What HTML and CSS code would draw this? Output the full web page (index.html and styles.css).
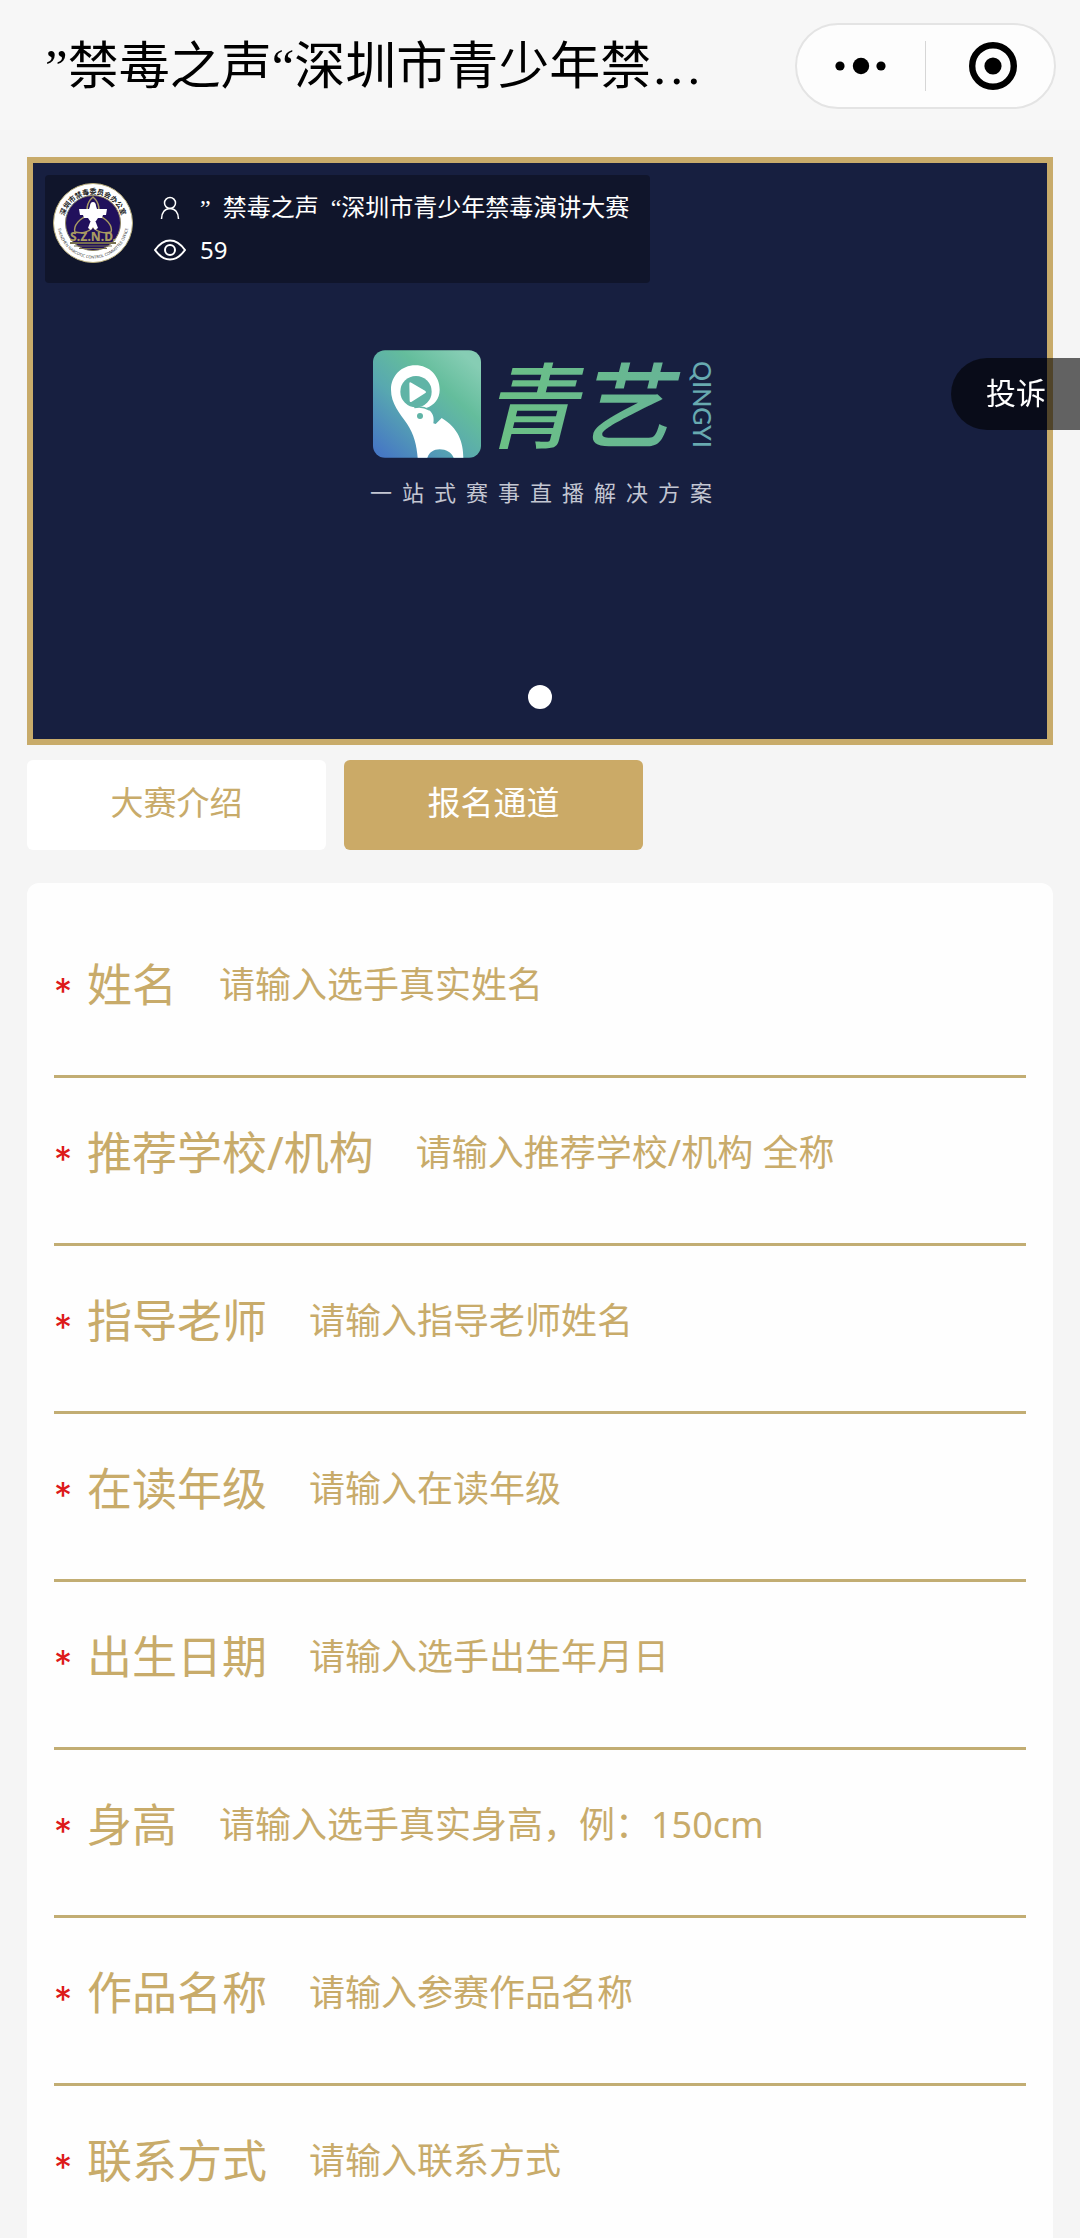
FILE: index.html
```html
<!DOCTYPE html>
<html lang="zh-CN">
<head>
<meta charset="utf-8">
<meta name="viewport" content="width=device-width, initial-scale=1">
<title>深圳市青少年禁毒演讲大赛</title>
<link rel="stylesheet" href="styles.css">
</head>
<body>
<header class="nav">
  <h1 class="nav-title">”禁毒之声“深圳市青少年禁…</h1>
  <div class="capsule">
    <button class="capsule-btn" type="button" aria-label="更多">
      <svg width="52" height="18" viewBox="0 0 52 18"><circle cx="5" cy="9" r="4.6"/><circle cx="26" cy="9" r="8.2"/><circle cx="46" cy="9" r="4.6"/></svg>
    </button>
    <span class="capsule-line"></span>
    <button class="capsule-btn capsule-close" type="button" aria-label="关闭">
      <svg width="48" height="48" viewBox="0 0 48 48"><circle cx="24" cy="24" r="20.8" fill="none" stroke="#000" stroke-width="6.4"/><circle cx="24" cy="24" r="8.6"/></svg>
    </button>
  </div>
</header>

<main class="content">
  <section class="banner">
    <div class="live-info">
      <svg class="emblem" viewBox="0 0 80 80" aria-hidden="true">
        <defs>
          <path id="arc-top" d="M11 46A29.500 29.500 0 1 1 69 46"/>
          <path id="arc-bottom" d="M4.500 40A35.500 35.500 0 0 0 75.500 40"/>
        </defs>
        <circle cx="40" cy="40" r="39.500" fill="#fff" stroke="#b9ad7c"/>
        <circle cx="40" cy="40" r="27.500" fill="#21105c" stroke="#8d8562"/>
        <text class="emblem-cn"><textPath href="#arc-top" startOffset="50%" text-anchor="middle">深圳市禁毒委员会办公室</textPath></text>
        <text class="emblem-en"><textPath href="#arc-bottom" startOffset="50%" text-anchor="middle">SHENZHEN NARCOTIC CONTROL COMMITTEE OFFICE</textPath></text>
        <path d="M40 14C33 20 33 28 36 33C27 34 20 43 22 49C29 51 36 49 40 44C44 49 51 51 58 49C60 43 53 34 44 33C47 28 47 20 40 14Z" fill="none" stroke="#a89b62" stroke-width="1.500"/>
        <path d="M40 19c-2 0-3 2-3 4l-1 3H26l1 6h3l1 3h4l2 3h6l2-3h4l1-3h3l1-6H44l-1-3c0-2-1-4-3-4z" fill="#fff"/>
        <path d="M38 37l-3 8 3 2 2-3 2 3 3-2-3-8z" fill="#fff"/>
        <path d="M17 59h46v2H17zM21 62.500h38v1H21zM26 65h28v1H26z" fill="#77704f"/>
        <text class="emblem-mark" x="40" y="57.500" text-anchor="middle">S.Z.N.D.</text>
      </svg>
      <div class="live-lines">
        <p class="live-line">
          <svg class="live-icon" width="32" height="24" viewBox="0 0 32 24"><circle cx="16" cy="7" r="5.500"/><path d="M7.500 23c0-6.500 3.500-10.500 8.500-10.500s8.500 4 8.500 10.500"/></svg>
          <span class="live-name">”&nbsp; 禁毒之声&nbsp; “深圳市青少年禁毒演讲大赛</span>
        </p>
        <p class="live-line">
          <svg class="live-icon live-eye" width="32" height="24" viewBox="0 0 32 24"><path d="M1 12C6 5 11 2.500 16 2.500S26 5 31 12C26 19 21 21.500 16 21.500S6 19 1 12z"/><circle cx="16" cy="12" r="5"/></svg>
          <span>59</span>
        </p>
      </div>
    </div>

    <div class="brand">
      <div class="brand-row">
        <svg class="brand-icon" viewBox="41 60 324 322" aria-hidden="true">
          <defs>
            <linearGradient id="tile" x1="0" y1="0.900" x2="0.800" y2="0">
              <stop offset="0" stop-color="#4678c4"/>
              <stop offset="0.400" stop-color="#58a8b0"/>
              <stop offset="0.700" stop-color="#64bd9c"/>
              <stop offset="1" stop-color="#86cdb4"/>
            </linearGradient>
          </defs>
          <rect x="41" y="60" width="324" height="322" rx="36" fill="url(#tile)"/>
          <path d="M168 105C126 105 95 137 95 178C95 220 121 248 143 280C164 311 172 345 175 382H204C210 366 223 357 241 357C260 357 276 366 283 382H312C312 336 297 293 247 263L229 281L222 279C225 262 221 247 208 239L200 233C225 225 241 204 241 178C241 137 210 105 168 105Z" fill="#fff"/>
          <circle cx="170" cy="184" r="47" fill="#60b4a6"/>
          <path d="M150 160Q150 154 156 157L197 181Q203 185 197 189L157 214Q151 217 151 211Z" fill="#fff"/>
          <path d="M165 232Q188 226 210 239" fill="none" stroke="#60b4a6" stroke-width="4"/>
          <circle cx="182" cy="257" r="9" fill="#60b4a6"/>
        </svg>
        <span class="brand-name">青艺</span>
        <span class="brand-latin">QINGYI</span>
      </div>
      <p class="brand-slogan">一站式赛事直播解决方案</p>
    </div>
    <span class="banner-dot"></span>
  </section>

  <nav class="tabs">
    <button class="tab" type="button">大赛介绍</button>
    <button class="tab tab-active" type="button">报名通道</button>
  </nav>

  <form class="form">
    <div class="field"><span class="star">*</span><label for="f-name">姓名</label><input id="f-name" type="text" placeholder="请输入选手真实姓名"></div>
    <div class="field"><span class="star">*</span><label for="f-school">推荐学校/机构</label><input id="f-school" type="text" placeholder="请输入推荐学校/机构 全称"></div>
    <div class="field"><span class="star">*</span><label for="f-teacher">指导老师</label><input id="f-teacher" type="text" placeholder="请输入指导老师姓名"></div>
    <div class="field"><span class="star">*</span><label for="f-grade">在读年级</label><input id="f-grade" type="text" placeholder="请输入在读年级"></div>
    <div class="field"><span class="star">*</span><label for="f-birth">出生日期</label><input id="f-birth" type="text" placeholder="请输入选手出生年月日"></div>
    <div class="field"><span class="star">*</span><label for="f-height">身高</label><input id="f-height" type="text" placeholder="请输入选手真实身高，例：150cm"></div>
    <div class="field"><span class="star">*</span><label for="f-work">作品名称</label><input id="f-work" type="text" placeholder="请输入参赛作品名称"></div>
    <div class="field"><span class="star">*</span><label for="f-contact">联系方式</label><input id="f-contact" type="text" placeholder="请输入联系方式"></div>
  </form>
</main>

<button class="complain" type="button">投诉</button>
</body>
</html>
```
FILE: styles.css
```css
* {
  box-sizing: border-box;
}

body {
  margin: 0;
  height: 100vh;
  display: flex;
  flex-direction: column;
  overflow: hidden;
  background: #f5f5f5;
  color: #000;
  font-family: "Noto Sans", "Noto Sans CJK SC", sans-serif;
}

button,
input {
  font-family: inherit;
  border: 0;
  padding: 0;
  margin: 0;
}

h1,
p {
  margin: 0;
}

/* top bar */
.nav {
  flex: none;
  display: flex;
  align-items: center;
  justify-content: space-between;
  padding: 23px 24px 21px 45px;
  background: #f7f7f7;
}

.nav-title {
  padding-top: 2px;
  font-family: "Liberation Serif", "Noto Sans CJK SC", sans-serif;
  font-size: 51px;
  line-height: 80px;
  font-weight: 400;
  white-space: nowrap;
}

.capsule {
  flex: none;
  width: 261px;
  height: 86px;
  display: flex;
  align-items: center;
  background: #fdfdfd;
  border: 2px solid #e4e4e4;
  border-radius: 43px;
}

.capsule-btn {
  flex: 1 1 0;
  min-width: 0;
  height: 100%;
  display: flex;
  align-items: center;
  justify-content: center;
  background: none;
}

.capsule-close svg {
  margin-left: 6px;
}

.capsule-line {
  width: 1px;
  height: 50px;
  background: #d6d6d6;
}

/* scrolling content */
.content {
  flex: 1;
  min-height: 0;
  overflow-y: auto;
  scrollbar-width: none;
  padding: 27px 27px 0;
}

.banner {
  position: relative;
  height: 588px;
  padding-top: 187px;
  border: 6px solid #c8ab6a;
  background: #171f40;
}

.live-info {
  position: absolute;
  top: 12px;
  left: 12px;
  display: flex;
  gap: 21px;
  height: 108px;
  padding: 8px 21px 8px 8px;
  border-radius: 4px;
  background: #10152b;
  color: #fff;
}

.emblem {
  width: 80px;
  height: 80px;
}

.emblem-cn {
  font-size: 7px;
  font-weight: 700;
  fill: #222;
}

.emblem-en {
  font-size: 4px;
  fill: #333;
}

.emblem-mark {
  font-size: 12px;
  font-weight: 800;
  fill: #a89b62;
}

.live-lines {
  display: flex;
  flex-direction: column;
  gap: 10px;
  padding-top: 9px;
}

.live-line {
  display: flex;
  align-items: center;
  gap: 14px;
  font-size: 24px;
  line-height: 32px;
  white-space: nowrap;
}

.live-name {
  font-family: "Liberation Serif", "Noto Sans CJK SC", sans-serif;
}

.live-icon {
  fill: none;
  stroke: #fff;
  stroke-width: 1.5;
}

.live-eye {
  stroke-width: 2;
}

.brand {
  width: 340px;
  margin: 0 auto;
  padding-left: 3px;
}

.brand-row {
  display: flex;
  align-items: center;
  height: 108px;
}

.brand-icon {
  flex: none;
  width: 108px;
  height: 108px;
}

.brand-name {
  flex: none;
  padding: 0 20px 0 2px;
  font-size: 93px;
  line-height: 104px;
  margin-bottom: 6px;
  font-weight: 500;
  font-style: italic;
  font-family: "Noto Sans CJK SC", sans-serif;
  color: transparent;
  background: linear-gradient(80deg, #6cc283, #66b398);
  background-clip: text;
}

.brand-latin {
  writing-mode: vertical-rl;
  font-family: Lato, sans-serif;
  font-size: 25px;
  line-height: 28px;
  font-weight: 500;
  color: #68aab0;
}

.brand-slogan {
  margin-top: 18px;
  margin-left: -3px;
  font-size: 22px;
  line-height: 32px;
  letter-spacing: 10px;
  white-space: nowrap;
  color: #c3c6d2;
}

.banner-dot {
  position: absolute;
  bottom: 30px;
  left: 50%;
  width: 24px;
  height: 24px;
  margin-left: -12px;
  border-radius: 50%;
  background: #fff;
}

/* tabs */
.tabs {
  display: flex;
  gap: 18px;
  margin-top: 15px;
}

.tab {
  width: 299px;
  height: 90px;
  padding-bottom: 8px;
  border-radius: 6px;
  background: #fff;
  color: #c8ab6a;
  font-size: 33px;
}

.tab-active {
  background: #cbaa67;
  color: #fff;
}

/* sign-up form */
.form {
  margin-top: 33px;
  padding: 27px;
  border-radius: 12px;
  background: #fefefe;
}

.field {
  display: flex;
  align-items: center;
  height: 168px;
  padding-bottom: 16px;
  border-bottom: 3px solid #c2ad73;
  color: #c8ab6a;
}

.star {
  width: 33px;
  padding-top: 12px;
  font-family: Inter, sans-serif;
  font-size: 36px;
  line-height: 36px;
  color: #dd1a1a;
}

.field label {
  margin-right: 42px;
  font-size: 45px;
  line-height: 60px;
  white-space: nowrap;
}

.field input {
  flex: 1;
  min-width: 0;
  height: 60px;
  background: none;
  outline: 0;
  font-size: 36px;
  color: #c8ab6a;
}

.field input::placeholder {
  color: #c8ab6a;
  opacity: 1;
}

/* floating button */
.complain {
  position: fixed;
  top: 358px;
  right: 0;
  height: 72px;
  padding: 0 34px 6px 35px;
  border-radius: 36px 0 0 36px;
  background: rgba(0, 0, 0, 0.6);
  color: #fff;
  font-size: 30px;
}
```
